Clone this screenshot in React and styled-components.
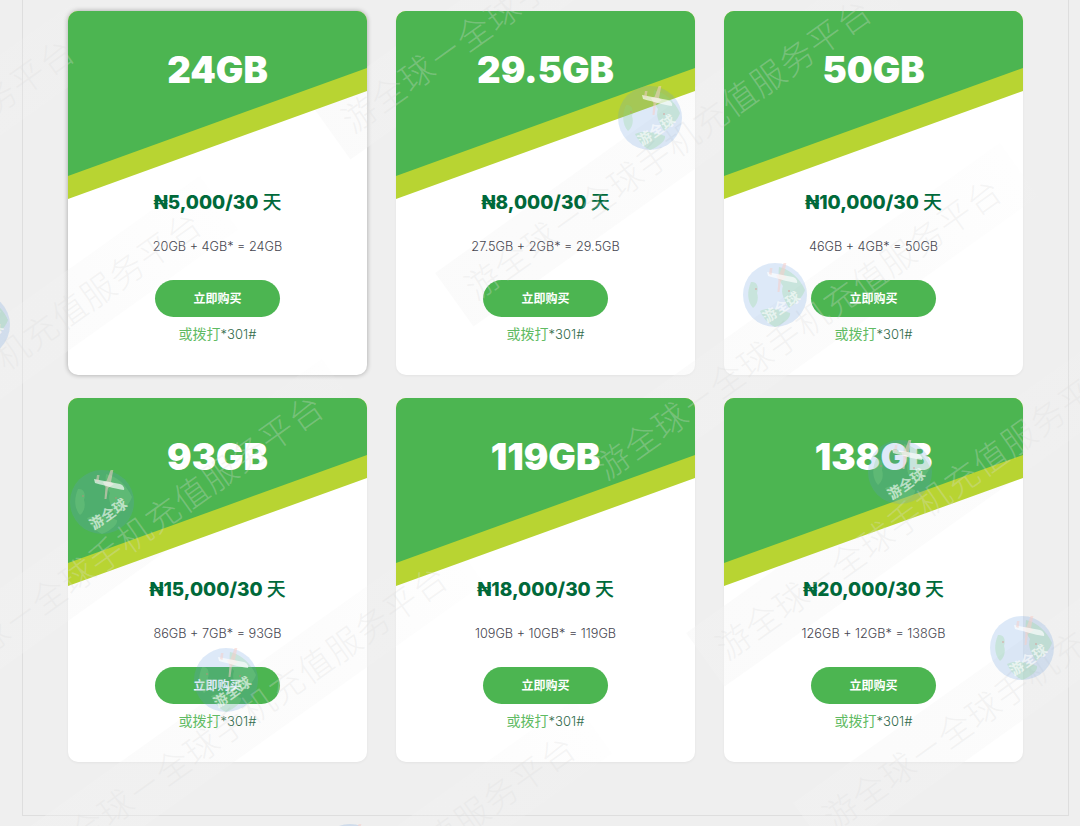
import React from "react";
import styled, { createGlobalStyle } from "styled-components";

const LATIN = `Inter, "Noto Sans CJK SC", sans-serif`;
const CJK = `"Noto Sans CJK SC", sans-serif`;

const GlobalStyle = createGlobalStyle`
    html, body {
        margin: 0;
        padding: 0;
        background: #efefef;
        overflow: hidden;
    }
    body {
        font-family: ${LATIN};
    }
`;

const Page = styled.div`
    position: relative;
    width: 1080px;
    height: 826px;
    overflow: hidden;
`;

const Wrapper = styled.main`
    box-sizing: border-box;
    width: 1047px;
    height: 816px;
    margin-left: 22px;
    padding: 11px 45px 0;
    border: 1px solid #dedede;
    border-top: 0;
`;

const Grid = styled.div`
    display: grid;
    grid-template-columns: repeat(3, 299px);
    column-gap: 29px;
    row-gap: 23px;
`;

const Card = styled.article`
    height: 364px;
    background: #fff;
    border-radius: 10px;
    overflow: hidden;
    box-shadow: ${props => props.$active ? "0 0 5px rgba(0, 0, 0, 0.32)" : "0 1px 3px rgba(0, 0, 0, 0.05)"};
`;

const Banner = styled.div`
    position: relative;
    z-index: 2;
    height: 188px;
    margin-bottom: -10px;
    background: #b8d432;
    clip-path: polygon(0 0, 100% 0, 100% 80px, 0 188px);
`;

const BannerFill = styled.div`
    height: 165px;
    background: #4cb551;
    clip-path: polygon(0 0, 100% 0, 100% 57px, 0 165px);
    text-align: center;
`;

const Size = styled.h2`
    margin: 0;
    padding-top: 36px;
    font-size: 36.5px;
    line-height: 46px;
    font-weight: 900;
    color: #fff;
`;

const Body = styled.div`
    position: relative;
    z-index: 2;
    display: flex;
    flex-direction: column;
    align-items: center;
`;

const Price = styled.div`
    font-size: 19px;
    line-height: 24px;
    font-weight: 800;
    color: #00693a;

    span {
        font-family: ${CJK};
        font-weight: 500;
    }
`;

const Detail = styled.div`
    margin-top: 22px;
    font-size: 12.7px;
    line-height: 20px;
    font-weight: 300;
    color: #45454f;
`;

const BuyButton = styled.button`
    width: 125px;
    height: 37px;
    margin-top: 23px;
    padding: 0 0 2px;
    border: 0;
    border-radius: 19px;
    background: #4cb551;
    color: #fff;
    font-family: ${CJK};
    font-size: 12px;
    font-weight: 700;
    cursor: pointer;
`;

const Dial = styled.div`
    margin-top: 6px;
    font-family: ${CJK};
    font-size: 14px;
    line-height: 20px;
    color: #5fbb63;

    span {
        font-family: ${LATIN};
        font-size: 13px;
        font-weight: 300;
        color: #2f6a4a;
    }
`;

const Layer = styled.div`
    position: absolute;
    inset: 0;
    z-index: ${props => props.$z};
    overflow: hidden;
    pointer-events: none;
`;

const Band = styled.div`
    position: absolute;
    left: ${props => props.$x}px;
    top: ${props => props.$y}px;
    width: 534px;
    height: 66px;
    background: linear-gradient(90deg, rgba(243, 243, 243, 0.36), rgba(243, 243, 243, 0.26) 70%, rgba(243, 243, 243, 0.08));
    transform-origin: 0 0;
    transform: rotate(-35.5deg) translate(-34px, -33px);
`;

const Mark = styled.div`
    position: absolute;
    left: ${props => props.$x}px;
    top: ${props => props.$y}px;
    height: 40px;
    font-family: ${CJK};
    font-size: 34px;
    line-height: 40px;
    font-weight: 300;
    letter-spacing: 1px;
    white-space: nowrap;
    color: rgba(222, 222, 222, 0.3);
    transform-origin: 0 0;
    transform: rotate(-35.5deg) translate(-17px, -20px);
`;

const GlobeMark = styled.svg`
    position: absolute;
    left: ${props => props.$x - 32}px;
    top: ${props => props.$y - 32}px;
    width: 64px;
    height: 64px;
`;

const Globe = ({ x, y }) => (
    <GlobeMark $x={x} $y={y} viewBox="0 0 64 64">
        <defs>
            <clipPath id="globe-clip">
                <circle cx="32" cy="32" r="32" />
            </clipPath>
        </defs>
        <circle cx="32" cy="32" r="32" fill="rgba(95, 150, 220, 0.21)" />
        <g clipPath="url(#globe-clip)" fill="rgba(140, 215, 140, 0.26)">
            <path d="M36 4C46 6 57 15 62 27C60 34 53 40 46 45C42 38 37 30 40 23C36 18 35 12 36 4Z" />
            <path d="M8 19C14 18 16 24 14 30C16 36 14 42 10 45C4 38 4 28 8 19Z" />
            <path d="M17 48C26 44 36 46 47 50C48 54 42 60 32 64C24 60 20 54 17 48Z" />
        </g>
        <path d="M41 -1L43.5 -1L41 12L44 14L38 18L36.5 29L34.5 29L35.5 17L33 12L36.5 11Z" fill="rgba(245, 205, 200, 0.55)" />
        <path d="M24 9L50 14C53 15 55 18 54 20C50 20 36 16 25 13Z" fill="rgba(255, 255, 255, 0.66)" />
        <path d="M27 5L29.5 5L28.5 12L26 11Z" fill="rgba(245, 205, 200, 0.5)" />
        <circle cx="13" cy="26" r="1" fill="rgba(225, 120, 120, 0.4)" />
        <circle cx="46" cy="28" r="1" fill="rgba(225, 120, 120, 0.4)" />
        <text x="39" y="49" textAnchor="middle" fontFamily={CJK} fontSize="14" fontWeight="700" fill="rgba(255, 255, 255, 0.62)" transform="rotate(-35 39 45)">游全球</text>
    </GlobeMark>
);

const plans = [
    { size: "24GB", price: "₦5,000/30", detail: "20GB + 4GB* = 24GB", active: true },
    { size: "29.5GB", price: "₦8,000/30", detail: "27.5GB + 2GB* = 29.5GB" },
    { size: "50GB", price: "₦10,000/30", detail: "46GB + 4GB* = 50GB" },
    { size: "93GB", price: "₦15,000/30", detail: "86GB + 7GB* = 93GB" },
    { size: "119GB", price: "₦18,000/30", detail: "109GB + 10GB* = 119GB" },
    { size: "138GB", price: "₦20,000/30", detail: "126GB + 12GB* = 138GB" }
];

// where the first character of each diagonal watermark sits
const marks = [
    [-315, 320], [-188, 493], [-66, 676], [58, 847], [186, 1017],
    [359, 113], [482, 280], [612, 460], [733, 640], [840, 810]
];

const globes = [
    [-22, 325], [650, 118], [775, 295], [102, 502], [226, 680],
    [900, 472], [1022, 648], [350, 856]
];

export default function App() {
    return (
        <Page>
            <GlobalStyle />
            <Wrapper>
                <Grid>
                    {plans.map(plan => (
                        <Card key={plan.size} $active={plan.active}>
                            <Banner>
                                <BannerFill>
                                    <Size>{plan.size}</Size>
                                </BannerFill>
                            </Banner>
                            <Body>
                                <Price>{plan.price} <span>天</span></Price>
                                <Detail>{plan.detail}</Detail>
                                <BuyButton>立即购买</BuyButton>
                                <Dial>或拨打<span>*301#</span></Dial>
                            </Body>
                        </Card>
                    ))}
                </Grid>
            </Wrapper>
            <Layer $z={1}>
                {marks.map(([x, y]) => <Band key={x} $x={x} $y={y} />)}
            </Layer>
            <Layer $z={3}>
                {marks.map(([x, y]) => <Mark key={x} $x={x} $y={y}>游全球－全球手机充值服务平台</Mark>)}
                {globes.map(([x, y]) => <Globe key={x} x={x} y={y} />)}
            </Layer>
        </Page>
    );
}
